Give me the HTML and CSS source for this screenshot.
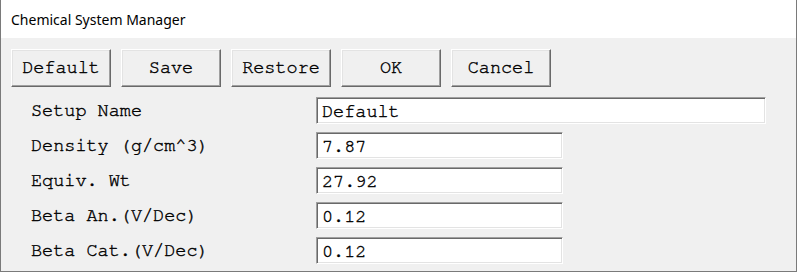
FILE: index.html
```html
<!DOCTYPE html>
<html lang="en">
<head>
  <meta charset="UTF-8">
  <title>Chemical System Manager</title>
  <link rel="stylesheet" href="styles.css">
</head>
<body>
  <div class="window">
    <div class="titlebar">Chemical System Manager</div>

    <div class="content">
      <div class="toolbar">
        <button class="btn">Default</button>
        <button class="btn">Save</button>
        <button class="btn">Restore</button>
        <button class="btn">OK</button>
        <button class="btn">Cancel</button>
      </div>

      <form class="form" onsubmit="return false;">
        <label>Setup Name</label>
        <input type="text" class="field wide" value="Default" />

        <label>Density (g/cm^3)</label>
        <input type="text" class="field" value="7.87" />

        <label>Equiv. Wt</label>
        <input type="text" class="field" value="27.92" />

        <label>Beta An.(V/Dec)</label>
        <input type="text" class="field" value="0.12" />

        <label>Beta Cat.(V/Dec)</label>
        <input type="text" class="field" value="0.12" />
      </form>
    </div>
  </div>
</body>
</html>
```

FILE: styles.css
```css
body { margin: 0; background: #f0f0f0; }
.window { width: 797px; height: 272px; box-sizing: border-box; border: 1px solid #7a7a7a; border-top: none; background: #f0f0f0; display: flex; flex-direction: column; }
.titlebar { height: 38px; background: #fff; padding-left: 10px; font-family: "Noto Sans", "Open Sans", sans-serif; font-size: 14px; line-height: 40px; color: #000; }
.content { padding: 11px 0 0 10px; }
.toolbar { display: flex; gap: 10px; }
.btn { width: 100px; height: 38px; box-sizing: border-box; background: #f0f0f0; padding: 0 0 2px; font-family: "Nimbus Mono PS", "FreeMono", "Courier 10 Pitch", "Liberation Mono", monospace; font-size: 18.5px; color: #000; -webkit-text-stroke: 0.4px #000; border: 1px solid; border-color: #fff #696969 #696969 #fff; box-shadow: inset -1px -1px #a0a0a0, inset 1px 1px #e3e3e3; }
.form { display: grid; grid-template-columns: 285px auto; row-gap: 8px; align-items: center; padding: 10px 0 0 20px; }
.form label { font-family: "Nimbus Mono PS", "FreeMono", "Courier 10 Pitch", "Liberation Mono", monospace; font-size: 18.5px; color: #000; -webkit-text-stroke: 0.4px #000; }
.field { width: 247px; height: 27px; box-sizing: border-box; margin: 0; padding: 2px 0 0 5px; background: #fff; font-family: "Nimbus Mono PS", "FreeMono", "Courier 10 Pitch", "Liberation Mono", monospace; font-size: 18.5px; color: #000; -webkit-text-stroke: 0.4px #000; border: 1px solid; border-color: #a0a0a0 #fff #fff #a0a0a0; box-shadow: inset 1px 1px #696969, inset -1px -1px #e3e3e3; outline: none; }
.field.wide { width: 450px; }
```
